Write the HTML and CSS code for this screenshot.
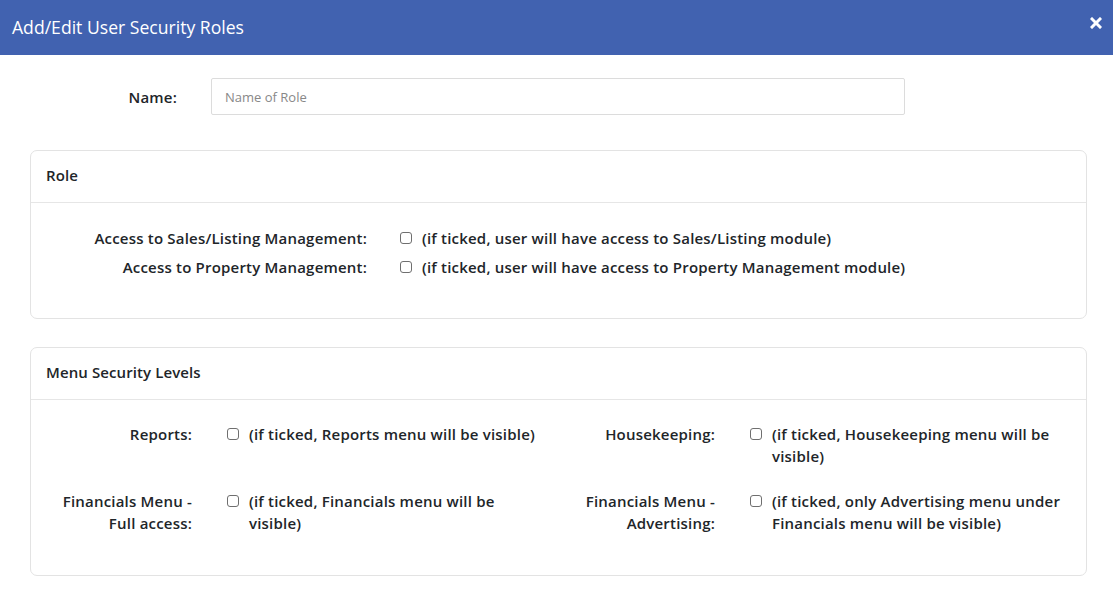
FILE: index.html
```html
<!DOCTYPE html>
<html>
<head>
<meta charset="utf-8">
<link rel="stylesheet" href="styles.css">
</head>
<body>
<div class="modal-header">
  <h4 class="modal-title">Add/Edit User Security Roles</h4>
  <button class="close" type="button" aria-label="Close">
    <svg width="12" height="12" viewBox="0 0 12 12"><path d="M2 2 L10 10 M10 2 L2 10" stroke="#fff" stroke-width="3" stroke-linecap="square"/></svg>
  </button>
</div>
<div class="modal-body">
  <div class="name-row">
    <label class="name-label">Name:</label>
    <input class="name-input" type="text" placeholder="Name of Role">
  </div>

  <div class="card role-card">
    <div class="card-header">Role</div>
    <div class="card-body role-body">
      <div class="role-row">
        <span class="role-label">Access to Sales/Listing Management:</span>
        <input class="cb" type="checkbox">
        <span class="cb-text">(if ticked, user will have access to Sales/Listing module)</span>
      </div>
      <div class="role-row">
        <span class="role-label">Access to Property Management:</span>
        <input class="cb" type="checkbox">
        <span class="cb-text">(if ticked, user will have access to Property Management module)</span>
      </div>
    </div>
  </div>

  <div class="card menu-card">
    <div class="card-header">Menu Security Levels</div>
    <div class="card-body menu-body">
      <div class="menu-item">
        <span class="menu-label">Reports:</span>
        <input class="cb" type="checkbox">
        <span class="cb-text">(if ticked, Reports menu will be visible)</span>
      </div>
      <div class="menu-item">
        <span class="menu-label">Housekeeping:</span>
        <input class="cb" type="checkbox">
        <span class="cb-text">(if ticked, Housekeeping menu will be visible)</span>
      </div>
      <div class="menu-item">
        <span class="menu-label">Financials Menu -<br>Full access:</span>
        <input class="cb" type="checkbox">
        <span class="cb-text">(if ticked, Financials menu will be visible)</span>
      </div>
      <div class="menu-item">
        <span class="menu-label">Financials Menu -<br>Advertising:</span>
        <input class="cb" type="checkbox">
        <span class="cb-text">(if ticked, only Advertising menu under Financials menu will be visible)</span>
      </div>
    </div>
  </div>
</div>
</body>
</html>
```
FILE: styles.css
```css
* { box-sizing: border-box; }
html, body { margin: 0; padding: 0; background: #fff; }
body {
  font-family: "Open Sans", "Liberation Sans", sans-serif;
  color: #212529;
  font-size: 15px;
}
.modal-header {
  height: 55px;
  background: #4162b0;
  display: flex;
  align-items: center;
  justify-content: space-between;
  padding: 0 11px 0 12px;
}
.modal-title {
  margin: 0 0 2px 0;
  color: #fff;
  font-size: 17.6px;
  font-weight: 500;
  line-height: 24px;
}
.close {
  background: none;
  border: 0;
  padding: 0;
  width: 12px;
  height: 12px;
  display: flex;
  margin-bottom: 9px;
  cursor: pointer;
}
.modal-body {
  padding: 23px 26px 20px 30px;
}
.name-row {
  display: flex;
  align-items: center;
}
.name-label {
  width: 147px;
  text-align: right;
  font-weight: 600;
  font-size: 15px;
  letter-spacing: 0.2px;
  margin-right: 34px;
}
.name-input {
  width: 694px;
  height: 37px;
  border: 1px solid #dcdcdc;
  border-radius: 2px;
  padding: 0 13px;
  font-family: "Open Sans", "Liberation Sans", sans-serif;
  font-size: 13px;
  color: #333;
  outline: none;
}
.name-input::placeholder { color: #888; }
.card {
  border: 1px solid #e3e3e3;
  border-radius: 7px;
  background: #fff;
}
.role-card { margin-top: 35px; }
.menu-card { margin-top: 28px; }
.card-header {
  height: 52px;
  display: flex;
  align-items: center;
  padding: 0 15px 4px 15px;
  font-weight: 600;
  font-size: 15px;
  letter-spacing: 0.1px;
  border-bottom: 1px solid #e6e6e6;
}
.role-body {
  padding: 20px 4px 37px 4px;
}
.role-row {
  display: flex;
  align-items: center;
  height: 29px;
  font-weight: 600;
  letter-spacing: 0.2px;
}
.role-label {
  width: 332px;
  text-align: right;
  margin-right: 33px;
}
.cb {
  appearance: none;
  -webkit-appearance: none;
  width: 12px;
  height: 12px;
  margin: 0 10px 0 0;
  border: 1px solid #6f6f6f;
  border-radius: 3px;
  background: #fff;
  flex: none;
}
.menu-body {
  padding: 23px 5px 41px 4px;
  display: grid;
  grid-template-columns: 1fr 1fr;
  row-gap: 23px;
}
.menu-item {
  display: flex;
  align-items: flex-start;
  font-weight: 600;
  line-height: 22px;
  letter-spacing: 0.2px;
}
.menu-label {
  width: 157px;
  text-align: right;
  margin-right: 35px;
  flex: none;
}
.menu-item .cb { margin-top: 5px; }
.menu-item .cb-text { flex: 0 0 292px; }
```
